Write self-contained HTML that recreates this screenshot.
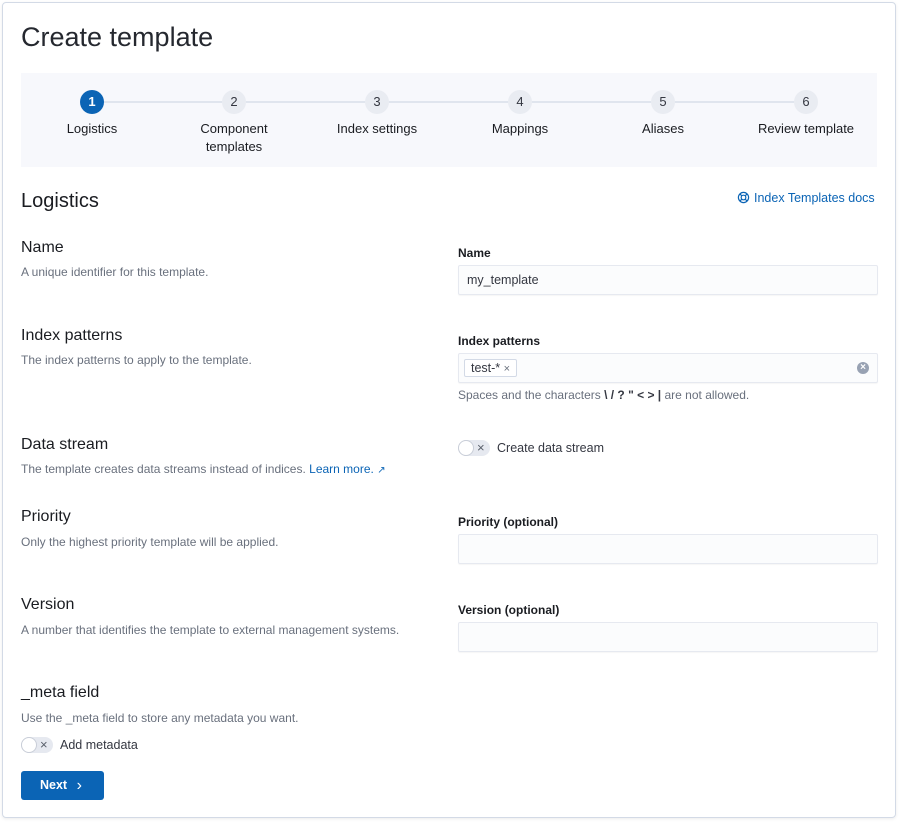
<!DOCTYPE html>
<html><head><meta charset="utf-8"><style>
*{box-sizing:border-box;margin:0;padding:0}
body{width:900px;height:822px;background:#fff;font-family:"Liberation Sans",sans-serif;position:relative;overflow:hidden;color:#1a1c21}
.a{position:absolute;white-space:nowrap}
.panel{position:absolute;left:2px;top:2px;width:894px;height:816px;border:1px solid #d3dae6;border-radius:4px;box-shadow:0 1px 3px rgba(0,0,0,.08)}
.steps{position:absolute;left:21px;top:73px;width:856px;height:94px;background:#f7f8fc}
.line{position:absolute;top:101px;height:2px;background:#e0e5ee}
.c{position:absolute;width:24px;height:24px;border-radius:50%;background:#e9ecf2;color:#343741;font-size:13px;text-align:center;line-height:24px;top:90px}
.sl{position:absolute;top:120px;width:130px;text-align:center;font-size:13px;line-height:18px;color:#1a1c21}
.h3{font-size:16px;color:#1a1c21}
.d{font-size:12px;color:#69707d}
.lab{font-size:12px;font-weight:bold;color:#1a1c21}
.in{position:absolute;left:458px;width:420px;height:30px;background:#fbfcfd;border:1px solid #e6e9f0;border-radius:2px;box-shadow:0 1px 1px rgba(0,0,0,.04)}
.tog{position:absolute;width:32px;height:16px;border-radius:8px;background:#e6e9f0}
.tog:before{content:"";position:absolute;left:0;top:0;width:16px;height:16px;border-radius:50%;background:#fff;border:1px solid #c9ced8;box-sizing:border-box}
.tog:after{content:"×";position:absolute;left:19px;top:1px;font-size:13px;line-height:14px;color:#5a606b}
</style></head><body>
<div class="panel"></div>
<div class="a" style="left:21px;top:22px;font-size:27px;color:#25282f">Create template</div>
<div class="steps"></div>
<div class="line" style="left:92px;width:714px"></div>
<div class="c" style="left:80px;background:#0b64b5;color:#fff;font-weight:bold">1</div>
<div class="c" style="left:222px">2</div>
<div class="c" style="left:365px">3</div>
<div class="c" style="left:508px">4</div>
<div class="c" style="left:651px">5</div>
<div class="c" style="left:794px">6</div>
<div class="sl" style="left:27px">Logistics</div>
<div class="sl" style="left:169px">Component<br>templates</div>
<div class="sl" style="left:312px">Index settings</div>
<div class="sl" style="left:455px">Mappings</div>
<div class="sl" style="left:598px">Aliases</div>
<div class="sl" style="left:741px">Review template</div>

<div class="a" style="left:21px;top:190px;font-size:20px">Logistics</div>
<div class="a" style="left:737px;top:191px;font-size:12.5px;color:#0b64b5"><svg width="13" height="13" viewBox="0 0 14 14" style="vertical-align:-2px;margin-right:4px"><circle cx="7" cy="7" r="5.5" fill="none" stroke="#0b64b5" stroke-width="1.3"/><circle cx="7" cy="7" r="2.5" fill="none" stroke="#0b64b5" stroke-width="1.3"/><path d="M3 3l2.3 2.3M11 3L8.7 5.3M3 11l2.3-2.3M11 11L8.7 8.7" stroke="#0b64b5" stroke-width="1.3"/></svg>Index Templates docs</div>

<div class="a h3" style="left:21px;top:239px">Name</div>
<div class="a d" style="left:21px;top:265px">A unique identifier for this template.</div>
<div class="a lab" style="left:458px;top:246px">Name</div>
<div class="in" style="top:265px"><span class="a" style="left:8px;top:7px;font-size:12.5px;color:#343741">my_template</span></div>

<div class="a h3" style="left:21px;top:327px">Index patterns</div>
<div class="a d" style="left:21px;top:353px">The index patterns to apply to the template.</div>
<div class="a lab" style="left:458px;top:334px">Index patterns</div>
<div class="in" style="top:353px"><span class="a" style="left:5px;top:5px;height:18px;border:1px solid #d3dae6;border-radius:2px;background:#fff;font-size:12.5px;line-height:16px;padding:0 6px;color:#343741">test-* <span style="font-size:11px;color:#69707d">×</span></span><span class="a" style="left:398px;top:8px;width:12px;height:12px;border-radius:50%;background:#98a2b3;color:#fff;font-size:10px;line-height:12px;text-align:center;font-weight:bold">×</span></div>
<div class="a d" style="left:458px;top:388px">Spaces and the characters <b style="color:#343741">\ / ? " &lt; &gt; |</b> are not allowed.</div>

<div class="a h3" style="left:21px;top:436px">Data stream</div>
<div class="a d" style="left:21px;top:462px">The template creates data streams instead of indices. <span style="color:#0b64b5">Learn more.</span> <span style="color:#0b64b5;font-size:10px">↗</span></div>
<div class="tog" style="left:458px;top:440px"></div>
<div class="a" style="left:497px;top:441px;font-size:12.5px;color:#343741">Create data stream</div>

<div class="a h3" style="left:21px;top:508px">Priority</div>
<div class="a d" style="left:21px;top:535px">Only the highest priority template will be applied.</div>
<div class="a lab" style="left:458px;top:515px">Priority (optional)</div>
<div class="in" style="top:534px"></div>

<div class="a h3" style="left:21px;top:596px">Version</div>
<div class="a d" style="left:21px;top:623px">A number that identifies the template to external management systems.</div>
<div class="a lab" style="left:458px;top:603px">Version (optional)</div>
<div class="in" style="top:622px"></div>

<div class="a h3" style="left:21px;top:684px">_meta field</div>
<div class="a d" style="left:21px;top:711px">Use the _meta field to store any metadata you want.</div>
<div class="tog" style="left:21px;top:737px"></div>
<div class="a" style="left:60px;top:738px;font-size:12.5px;color:#343741">Add metadata</div>

<div class="a" style="left:21px;top:771px;width:83px;height:29px;background:#0b64b5;border-radius:3px;color:#fff;font-weight:bold;font-size:12.5px;line-height:29px;padding-left:19px">Next <span style="font-weight:normal;font-size:16px;margin-left:6px;vertical-align:-1px">›</span></div>
</body></html>
